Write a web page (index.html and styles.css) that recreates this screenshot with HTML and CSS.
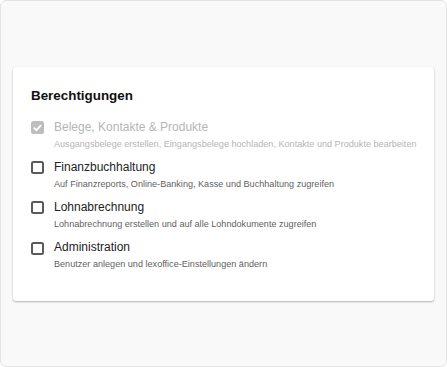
FILE: index.html
```html
<!DOCTYPE html>
<html lang="de">
<head>
    <meta charset="UTF-8">
    <meta name="viewport" content="width=device-width, initial-scale=1.0">
    <title>Berechtigungen</title>
    <link rel="stylesheet" href="styles.css">
</head>
<body>
    <div class="frame">
        <div class="card">
            <h2>Berechtigungen</h2>

            <div class="perm-list">
                <label class="perm disabled">
                    <span class="box checked">
                        <svg viewBox="0 0 13 13" width="13" height="13"><path d="M2.8 6.7 L5.4 9.2 L10.2 4.2" fill="none" stroke="#fff" stroke-width="1.8"/></svg>
                    </span>
                    <span class="perm-text">
                        <span class="perm-title">Belege, Kontakte &amp; Produkte</span>
                        <span class="perm-desc">Ausgangsbelege erstellen, Eingangsbelege hochladen, Kontakte und Produkte bearbeiten</span>
                    </span>
                </label>

                <label class="perm">
                    <span class="box"></span>
                    <span class="perm-text">
                        <span class="perm-title">Finanzbuchhaltung</span>
                        <span class="perm-desc">Auf Finanzreports, Online-Banking, Kasse und Buchhaltung zugreifen</span>
                    </span>
                </label>

                <label class="perm">
                    <span class="box"></span>
                    <span class="perm-text">
                        <span class="perm-title">Lohnabrechnung</span>
                        <span class="perm-desc">Lohnabrechnung erstellen und auf alle Lohndokumente zugreifen</span>
                    </span>
                </label>

                <label class="perm">
                    <span class="box"></span>
                    <span class="perm-text">
                        <span class="perm-title">Administration</span>
                        <span class="perm-desc">Benutzer anlegen und lexoffice-Einstellungen ändern</span>
                    </span>
                </label>
            </div>
        </div>
    </div>
</body>
</html>
```

FILE: styles.css
```css
body {
    margin: 0;
    font-family: 'Liberation Sans', Arial, sans-serif;
    background-color: #ffffff;
}

/* Outer frame */
.frame {
    box-sizing: border-box;
    height: 367px;
    padding: 66px 12px 0 12px;
    background-color: #f9f9f9;
    border: 1px solid #e4e4e4;
    border-radius: 6px;
}

/* Card */
.card {
    background-color: #fff;
    border-radius: 3px;
    box-shadow: 0 1px 2px rgba(0, 0, 0, 0.28), 0 0 1px rgba(0, 0, 0, 0.08);
    padding: 21px 18px 29px 18px;
    height: 234px;
    box-sizing: border-box;
}

.card h2 {
    margin: 0 0 14.5px 0;
    font-size: 13.4px;
    font-weight: bold;
    line-height: 16px;
    color: #111;
}

.perm-list {
    display: flex;
    flex-direction: column;
    gap: 6.7px;
}

.perm {
    display: flex;
    align-items: flex-start;
    gap: 10px;
}

.box {
    box-sizing: border-box;
    flex: none;
    width: 13px;
    height: 13px;
    margin-top: 2.5px;
    border: 2px solid #5a5a5a;
    border-radius: 2.5px;
    display: flex;
    align-items: center;
    justify-content: center;
}

.box.checked {
    border: none;
    background-color: #bdbdbd;
}

.perm-text {
    display: flex;
    flex-direction: column;
    white-space: nowrap;
}

.perm-title {
    font-size: 12px;
    line-height: 17px;
    color: #222;
}

.perm-desc {
    font-size: 9.1px;
    line-height: 16.5px;
    color: #5f5f5f;
}

.perm.disabled .perm-title,
.perm.disabled .perm-desc {
    color: #b5b5b5;
}
```
